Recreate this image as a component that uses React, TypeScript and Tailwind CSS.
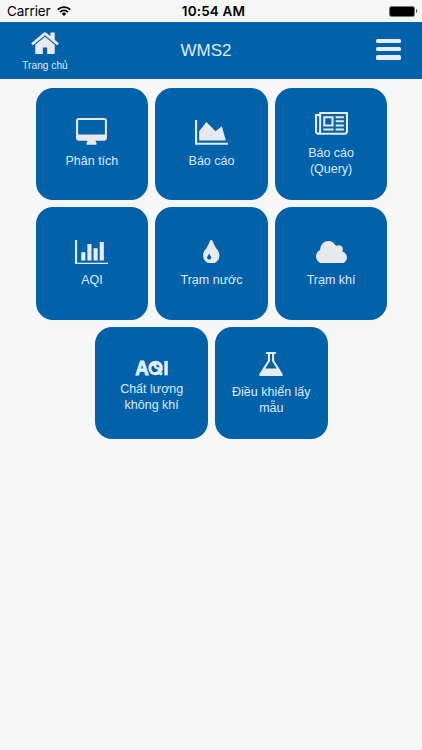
import type { ReactNode } from "react";

// Glyph outlines sit on a 1792-unit em, drawn y-down
const ICONS = {
  home: {
    viewBox: "69 253 1654 1283",
    d: "M1472 992v480q0 26-19 45t-45 19h-384v-384h-256v384h-384q-26 0-45-19t-19-45v-480q0-1 .5-3t.5-3l575-474 575 474q1 2 1 6zm223-69l-62 74q-8 9-21 11h-3q-13 0-21-7l-692-577-692 577q-12 8-24 7-13-2-21-11l-62-74q-8-10-7-23.5t11-21.5l719-599q32-26 76-26t76 26l244 204v-195q0-14 9-23t23-9h192q14 0 23 9t9 23v408l219 182q10 8 11 21.5t-7 23.5z",
  },
  desktop: {
    viewBox: "-64 0 1920 1664",
    d: "M1728 992v-832q0-13-9.5-22.5t-22.5-9.5h-1600q-13 0-22.5 9.5t-9.5 22.5v832q0 13 9.5 22.5t22.5 9.5h1600q13 0 22.5-9.5t9.5-22.5zm128-832v1088q0 66-47 113t-113 47h-544q0 37 16 77.5t32 71 16 43.5q0 26-19 45t-45 19h-512q-26 0-45-19t-19-45q0-14 16-44t32-70 16-78h-544q-66 0-113-47t-47-113v-1088q0-66 47-113t113-47h1600q66 0 113 47t47 113z",
  },
  areaChart: {
    viewBox: "0 0 2048 1536",
    d: "M2048 1408v128h-2048v-1536h128v1408h1920zm-384-1024l256 896h-1664v-576l448-576 576 576z",
  },
  newspaper: {
    viewBox: "0 0 2048 1408",
    d: "M1024 384h-384v384h384v-384zm128 640v128h-640v-128h640zm0-768v640h-640v-640h640zm640 768v128h-512v-128h512zm0-256v128h-512v-128h512zm0-256v128h-512v-128h512zm0-256v128h-512v-128h512zm-1536 960v-960h-128v960q0 26 19 45t45 19 45-19 19-45zm1664 0v-1088h-1536v1088q0 33-11 64h1483q26 0 45-19t19-45zm128-1216v1216q0 80-56 136t-136 56h-1664q-80 0-136-56t-56-136v-1088h256v-128h1792z",
  },
  barChart: {
    viewBox: "0 0 2048 1536",
    d: "M640 768v512h-256v-512h256zm384-512v1024h-256v-1024h256zm1024 1152v128h-2048v-1536h128v1408h1920zm-640-896v768h-256v-768h256zm384-384v1152h-256v-1152h256z",
  },
  drop: {
    viewBox: "384 0 1024 1536",
    d: "M896 1152q0-36-20-69-1-1-15.5-22.5t-25.5-38-25-44-21-50.5q-4-16-21-16t-21 16q-7 23-21 50.5t-25 44-25.5 38-15.5 22.5q-20 33-20 69 0 53 37.5 90.5t90.5 37.5 90.5-37.5 37.5-90.5zm512-128q0 212-150 362t-362 150-362-150-150-362q0-145 81-275 6-9 62.5-90.5t101-151 99.5-178 83-201.5q9-30 34-47t51-17 51.5 17 33.5 47q28 93 83 201.5t99.5 178 101 151 62.5 90.5q81 127 81 275z",
  },
  cloud: {
    viewBox: "64 128 1920 1408",
    d: "M1984 1152q0 159-112.5 271.5t-271.5 112.5h-1088q-185 0-316.5-131.5t-131.5-316.5q0-132 71-241.5t187-163.5q-2-28-2-43 0-212 150-362t362-150q158 0 286.5 88t187.5 230q70-62 166-62 106 0 181 75t75 181q0 75-41 138 129 30 213 134.5t84 239.5z",
  },
  flask: {
    viewBox: "150 128 1492 1536",
    d: "M1591 1448q56 89 21.5 152.5t-140.5 63.5h-1152q-106 0-140.5-63.5t21.5-152.5l503-793v-399h-64q-26 0-45-19t-19-45 19-45 45-19h512q26 0 45 19t19 45-19 45-45 19h-64v399zm-779-725l-272 429h712l-272-429-20-31v-436h-128v436z",
  },
};

function Icon({ name, className }: { name: keyof typeof ICONS; className: string }) {
  return (
    <svg viewBox={ICONS[name].viewBox} className={className} fill="#e8e9ec" aria-hidden="true">
      <path d={ICONS[name].d} />
    </svg>
  );
}

function AqiMark() {
  return (
    <svg viewBox="0 0 33 16" className="h-4 w-[33px] overflow-visible" fill="#e3ecf7" aria-hidden="true">
      <text x="0.3" y="15.2" fontSize="20" fontWeight="700" textLength="13.5" lengthAdjust="spacingAndGlyphs" stroke="#e3ecf7" strokeWidth="0.9">A</text>
      <circle cx="20.6" cy="8" r="7.3" />
      <path d="M22 13l2.4-2.4 3.4 3-1.8 1.8z" />
      <path d="M21.6 7.2V4.2a3.6 3.6 0 0 1 3 3zM18.2 5.6l1.8 3 3.4 1.4-1.6 1.6a3.4 3.4 0 0 1-3.6-6z" fill="#0262a9" />
      <rect x="29.3" y="0.9" width="3.5" height="14.4" />
    </svg>
  );
}

type Tile = { lines: string[]; icon: ReactNode; iconBox?: string };

const TILES: Tile[] = [
  { lines: ["Phân tích"], icon: <Icon name="desktop" className="h-[26.8px] w-[31px]" /> },
  { lines: ["Báo cáo"], icon: <Icon name="areaChart" className="h-[24.7px] w-[33px]" /> },
  { lines: ["Báo cáo", "(Query)"], icon: <Icon name="newspaper" className="h-[22.7px] w-[33px]" />, iconBox: "h-8 pb-[9.5px]" },
  { lines: ["AQI"], icon: <Icon name="barChart" className="h-[24.7px] w-[33px]" /> },
  { lines: ["Trạm nước"], icon: <Icon name="drop" className="h-[24.7px] w-[16.5px]" />, iconBox: "h-8 pb-[8.8px]" },
  { lines: ["Trạm khí"], icon: <Icon name="cloud" className="h-[22.7px] w-[31px]" />, iconBox: "h-8 pb-[9px]" },
  { lines: ["Chất lượng", "không khí"], icon: <AqiMark />, iconBox: "h-[27px] pb-[5px]" },
  { lines: ["Điều khiển lấy", "mẫu"], icon: <Icon name="flask" className="h-[24.7px] w-6" />, iconBox: "h-8 pb-[7.5px]" },
];

function StatusBar() {
  return (
    <div className="grid h-[22px] grid-cols-[1fr_80px_1fr] items-center pl-[7px] pr-[5px] font-['Inter',sans-serif] text-[13.5px] text-black">
      <div className="flex items-center gap-[6px]">
        <span className="tracking-[-0.1px]">Carrier</span>
        <svg viewBox="0 0 14 10" className="h-[10px] w-[14px]" aria-hidden="true">
          <g fill="none" stroke="#000" strokeWidth="1.8">
            <path d="M.7 3.7a9 9 0 0 1 12.6 0" />
            <path d="M3 6.1a5.7 5.7 0 0 1 8 0" />
          </g>
          <path d="M4.7 7.7a3.3 3.3 0 0 1 4.6 0L7 10z" />
        </svg>
      </div>
      <span className="whitespace-nowrap pl-[3px] text-center font-semibold tracking-[0.15px]">10:54 AM</span>
      <div className="flex items-center justify-end gap-px">
        <div className="h-[11px] w-[26px] rounded-[2.5px] border border-[#777] bg-black" />
        <div className="h-1 w-[1.5px] rounded-r-full bg-[#555]" />
      </div>
    </div>
  );
}

function Header() {
  return (
    <header className="grid h-[56.5px] grid-cols-[90px_1fr_100px] bg-[#0262a9] text-[#dfeaf6]">
      <a href="#" className="flex flex-col items-center pt-[10px]">
        <Icon name="home" className="h-[22.4px] w-[28px]" />
        <span className="mt-[5.6px] text-[10.2px] leading-3">Trang chủ</span>
      </a>
      <h1 className="self-center pt-px text-center text-[17px] leading-5">WMS2</h1>
      <button className="flex flex-col justify-center gap-[4px] pb-[2px] pl-[54px]" aria-label="Menu">
        <span className="h-[4.2px] w-[25px] rounded-[1.5px] bg-[#e6edf6]" />
        <span className="h-[4.2px] w-[25px] rounded-[1.5px] bg-[#e6edf6]" />
        <span className="h-[4.2px] w-[25px] rounded-[1.5px] bg-[#e6edf6]" />
      </button>
    </header>
  );
}

export default function App() {
  return (
    <div className="min-h-[750px] w-full overflow-hidden bg-[#f7f7f7] font-['Liberation_Sans',Arial,sans-serif]">
      <StatusBar />
      <Header />
      <main className="mx-auto mt-[9px] flex w-[353px] flex-wrap justify-center gap-[7px] pl-px">
        {TILES.map((tile) => (
          <a
            key={tile.lines.join(" ")}
            href="#"
            className="flex h-[112.6px] w-[112.6px] flex-col items-center justify-center rounded-[17px] bg-[#0262a9] pt-[1.6px] text-[12.5px] leading-4 text-[#dfeaf6]"
          >
            <span className={"flex items-end " + (tile.iconBox ?? "h-8 pb-[7.8px]")}>{tile.icon}</span>
            {tile.lines.map((line) => (
              <span key={line}>{line}</span>
            ))}
          </a>
        ))}
      </main>
    </div>
  );
}
